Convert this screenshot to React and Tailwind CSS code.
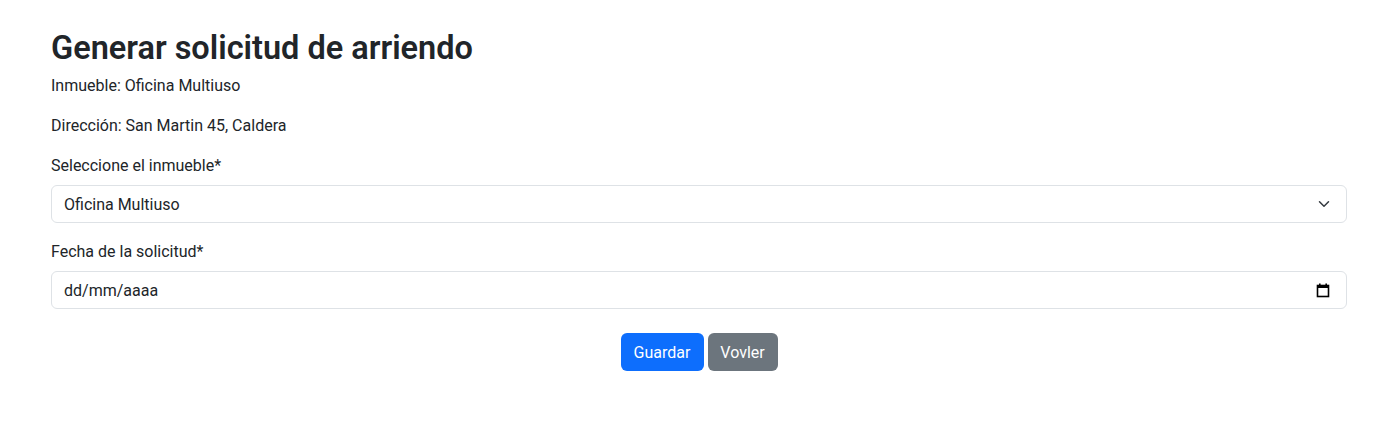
function Chevron() {
  return (
    <svg width="16" height="12" viewBox="0 0 16 16" fill="none" stroke="#343a40" strokeWidth="2" strokeLinecap="round" strokeLinejoin="round">
      <path d="m2 5 6 6 6-6" />
    </svg>
  );
}

function CalendarIcon() {
  return (
    <svg width="14" height="15" viewBox="0 0 14 15" fill="none">
      <rect x="1.5" y="2.5" width="11" height="11" stroke="#000" strokeWidth="1.6" fill="none" />
      <rect x="1" y="2" width="12" height="3" fill="#000" />
      <rect x="3" y="0.5" width="1.6" height="2.5" fill="#000" />
      <rect x="9.4" y="0.5" width="1.6" height="2.5" fill="#000" />
    </svg>
  );
}

export default function App() {
  return (
    <div className="min-h-[435px] bg-white text-[#212529] text-[16px] leading-6" style={{ fontFamily: 'Roboto, "Liberation Sans", sans-serif' }}>
      <div className="ml-[51px] w-[1296px] pt-[28px]">
        <h2 className="text-[32.5px] font-semibold leading-[38px] pt-px mb-[6px]">Generar solicitud de arriendo</h2>
        <p className="pt-px mb-[15px]">Inmueble: Oficina Multiuso</p>
        <p className="pt-px mb-[15px]">Dirección: San Martin 45, Caldera</p>

        <div className="mb-4">
          <label className="block pt-px mb-[7px]">Seleccione el inmueble*</label>
          <div className="flex items-center justify-between h-[38px] border border-[#dee2e6] rounded-[6px] pl-3 pr-[14px]">
            <span className="pt-px">Oficina Multiuso</span>
            <Chevron />
          </div>
        </div>

        <div>
          <label className="block pt-px mb-[7px]">Fecha de la solicitud*</label>
          <div className="flex items-center justify-between h-[38px] border border-[#dee2e6] rounded-[6px] pl-3 pr-[16px]">
            <span className="pt-px">dd/mm/aaaa</span>
            <CalendarIcon />
          </div>
        </div>

        <div className="flex justify-center gap-1 mt-6">
          <button className="h-[38px] w-[83px] pt-px rounded-[6px] bg-[#0d6efd] text-white">Guardar</button>
          <button className="h-[38px] w-[70px] pt-px rounded-[6px] bg-[#6c757d] text-white">Vovler</button>
        </div>
      </div>
    </div>
  );
}
